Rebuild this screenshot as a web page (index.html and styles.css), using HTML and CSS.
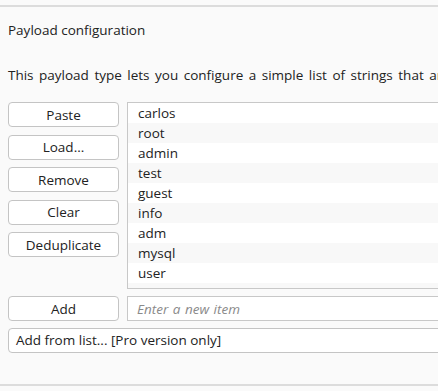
FILE: index.html
```html
<!DOCTYPE html>
<html lang="en">
<head>
    <meta charset="UTF-8">
    <title>Payload configuration</title>
    <link rel="stylesheet" href="styles.css">
</head>
<body>
    <div class="panel">
        <div class="title">Payload configuration</div>
        <div class="desc">This payload type lets you configure a simple list of strings that are used as payloads.</div>
        <div class="editor">
            <div class="buttons">
                <button>Paste</button>
                <button>Load...</button>
                <button>Remove</button>
                <button>Clear</button>
                <button>Deduplicate</button>
            </div>
            <ul class="list">
                <li>carlos</li>
                <li>root</li>
                <li>admin</li>
                <li>test</li>
                <li>guest</li>
                <li>info</li>
                <li>adm</li>
                <li>mysql</li>
                <li>user</li>
                <li></li>
            </ul>
            <button>Add</button>
            <input type="text" class="new-item" placeholder="Enter a new item">
        </div>
        <div class="combo">Add from list... [Pro version only]</div>
    </div>
</body>
</html>
```

FILE: styles.css
```css
html, body {
    margin: 0;
    padding: 0;
    height: 100%;
    overflow: hidden;
}
body {
    background-color: #fafafa;
    font-family: 'Open Sans', sans-serif;
    font-size: 13.5px;
    color: #222;
    padding-top: 5px;
    box-sizing: border-box;
}
.panel {
    border-top: 2px solid #dcdcdc;
    border-bottom: 2px solid #dcdcdc;
    height: 381px;
    box-sizing: border-box;
    padding-left: 8px;
    white-space: nowrap;
}
.title {
    line-height: 20px;
    margin-top: 13px;
}
.desc {
    line-height: 20px;
    margin-top: 25px;
    word-spacing: 2px;
}
.editor {
    display: grid;
    grid-template-columns: 111px 1fr;
    column-gap: 8px;
    row-gap: 7px;
    margin-top: 17px;
    margin-right: -40px;
}
.buttons {
    display: flex;
    flex-direction: column;
    gap: 7.5px;
}
button {
    font-family: inherit;
    font-size: 13.5px;
    color: #222;
    background-color: #fff;
    border: 1px solid #c4c4c4;
    border-radius: 4px;
    height: 25px;
    padding: 0;
    margin: 0;
}
.list {
    list-style: none;
    margin: 0;
    padding: 0;
    height: 187px;
    overflow: hidden;
    border: 1px solid #c8c8c8;
    box-sizing: border-box;
    background-color: #fff;
}
.list li {
    height: 20px;
    line-height: 21px;
    padding-left: 10px;
}
.list li:nth-child(even) {
    background-color: #f8f8f8;
}
.new-item {
    font-family: inherit;
    font-size: 13.5px;
    word-spacing: 1px;
    height: 25px;
    box-sizing: border-box;
    border: 1px solid #c8c8c8;
    background-color: #fff;
    padding: 0 9px;
    margin: 0;
    outline: none;
}
.new-item::placeholder {
    color: #8a8a8a;
    font-style: italic;
}
.combo {
    margin-top: 7px;
    margin-right: -40px;
    height: 25px;
    line-height: 23px;
    box-sizing: border-box;
    border: 1px solid #c4c4c4;
    border-radius: 4px;
    background-color: #fff;
    padding-left: 7px;
}
```
